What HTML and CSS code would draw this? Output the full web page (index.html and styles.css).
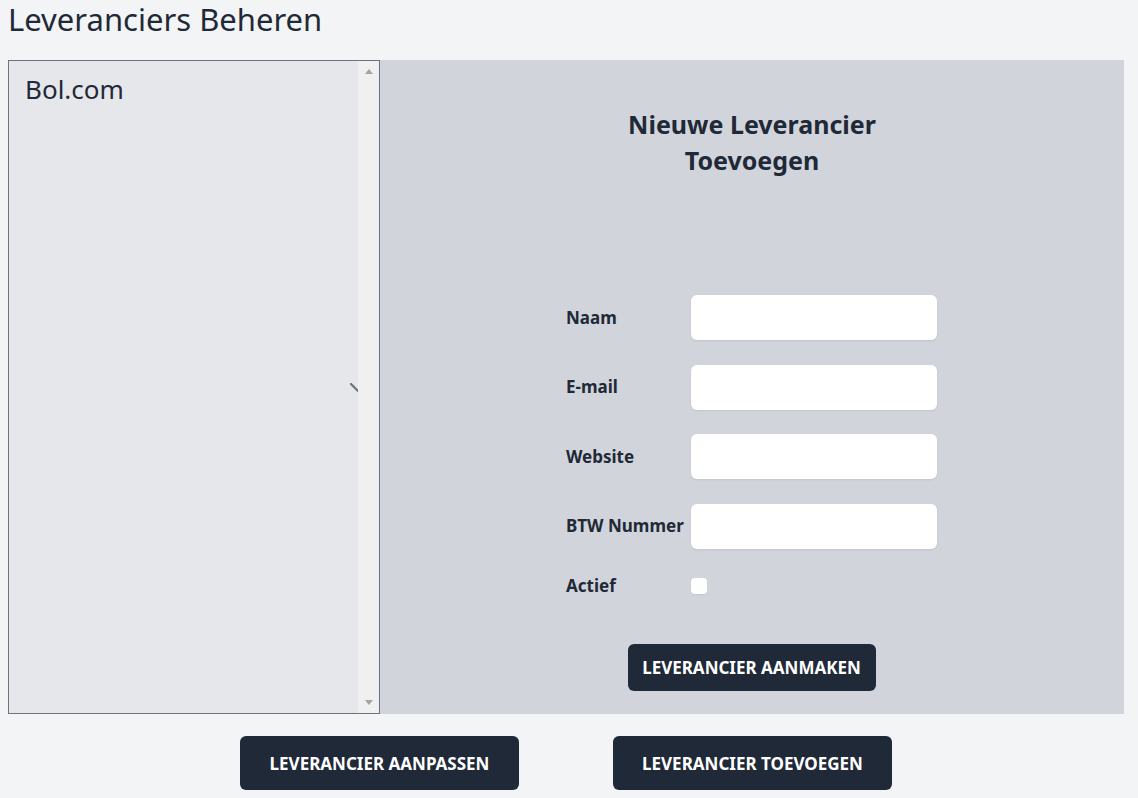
FILE: index.html
```html
<!DOCTYPE html>
<html lang="nl">
<head>
<meta charset="utf-8">
<title>Leveranciers Beheren</title>
<link rel="stylesheet" href="styles.css">
</head>
<body>
<div class="page">
  <h1 class="title">Leveranciers Beheren</h1>
  <div class="grid">
    <div class="listbox">
      <ul class="list">
        <li class="option">Bol.com</li>
      </ul>
      <svg class="chevron" width="16" height="9" viewBox="0 0 16 9" aria-hidden="true"><path d="M1 1 L8 8 L15 1" fill="none" stroke="#6b7280" stroke-width="2.2" stroke-linecap="round" stroke-linejoin="round"/></svg>
      <div class="scrollbar">
        <span class="arrow arrow-up"></span>
        <span class="arrow arrow-down"></span>
      </div>
    </div>
    <section class="panel">
      <h2 class="panel-title">Nieuwe Leverancier<br>Toevoegen</h2>
      <form class="form">
        <div class="row"><label class="label" for="naam">Naam</label><input class="input" id="naam" type="text"></div>
        <div class="row"><label class="label" for="email">E-mail</label><input class="input" id="email" type="text"></div>
        <div class="row"><label class="label" for="website">Website</label><input class="input" id="website" type="text"></div>
        <div class="row"><label class="label" for="btw">BTW Nummer</label><input class="input" id="btw" type="text"></div>
        <div class="row row-check"><label class="label" for="actief">Actief</label><input class="checkbox" id="actief" type="checkbox"></div>
        <div class="submit-wrap"><button class="btn btn-small" type="button">Leverancier aanmaken</button></div>
      </form>
    </section>
  </div>
  <div class="actions">
    <button class="btn btn-large" type="button">Leverancier aanpassen</button>
    <button class="btn btn-large" type="button">Leverancier toevoegen</button>
  </div>
</div>
</body>
</html>
```
FILE: styles.css
```css
* { box-sizing: border-box; }
html, body { margin: 0; padding: 0; }
body {
  background: #f3f4f6;
  color: #1f2937;
  font-family: "Noto Sans", "Open Sans", sans-serif;
  width: 1138px;
  height: 798px;
  overflow: hidden;
}
.page {
  padding-left: 8px;
  width: 1124px;
}
.title {
  margin: 0;
  padding-top: 1px;
  font-size: 31px;
  line-height: 37px;
  font-weight: 400;
  height: 60px;
}
.grid {
  display: grid;
  grid-template-columns: 372px 744px;
  height: 654px;
}
.listbox {
  position: relative;
  display: flex;
  background: #e5e7eb;
  border: 1px solid #6b7280;
}
.list {
  flex: 1;
  margin: 0;
  padding: 10px 0 0 16px;
  list-style: none;
}
.option {
  font-size: 26px;
  line-height: 36px;
}
.chevron {
  position: absolute;
  left: 341px;
  top: 322px;
}
.scrollbar {
  position: relative;
  width: 21px;
  background: #f0f0f0;
  display: flex;
  flex-direction: column;
  justify-content: space-between;
  align-items: center;
  padding: 8px 0 8px;
}
.arrow {
  width: 0;
  height: 0;
  border-left: 4.5px solid transparent;
  border-right: 4.5px solid transparent;
}
.arrow-up { border-bottom: 5px solid #a3a3a3; }
.arrow-down { border-top: 5px solid #a3a3a3; }
.panel {
  background: #d1d5db;
  display: flex;
  flex-direction: column;
  align-items: center;
  padding-top: 46px;
}
.panel-title {
  margin: 0;
  font-size: 25px;
  line-height: 36px;
  font-weight: 700;
  text-align: center;
}
.form {
  width: 371px;
  align-self: flex-start;
  margin-left: 186px;
  margin-top: 117px;
  display: flex;
  flex-direction: column;
  gap: 24.67px;
}
.row {
  display: flex;
  align-items: center;
  height: 45px;
}
.row-check { height: 24px; }
.label {
  width: 125px;
  font-size: 17px;
  font-weight: 700;
  line-height: 24px;
  white-space: nowrap;
}
.input {
  width: 246px;
  height: 45px;
  border: none;
  border-radius: 6px;
  background: #fff;
  box-shadow: 0 1px 2px rgba(0,0,0,0.08);
  font: inherit;
}
.checkbox {
  appearance: none;
  -webkit-appearance: none;
  margin: 0;
  width: 16px;
  height: 16px;
  border-radius: 4px;
  background: #fff;
  border: none;
  box-shadow: 0 1px 2px rgba(0,0,0,0.06);
}
.submit-wrap {
  display: flex;
  justify-content: center;
  margin-top: 22px;
}
.btn {
  font-family: inherit;
  font-weight: 700;
  font-size: 17px;
  text-transform: uppercase;
  color: #fff;
  background: #1f2937;
  border: none;
  border-radius: 6px;
  display: flex;
  align-items: center;
  justify-content: center;
  padding: 0;
}
.btn-small {
  width: 248px;
  height: 47px;
}
.actions {
  display: flex;
  justify-content: center;
  gap: 94px;
  margin-top: 22px;
}
.btn-large {
  width: 279px;
  height: 54px;
}
```
